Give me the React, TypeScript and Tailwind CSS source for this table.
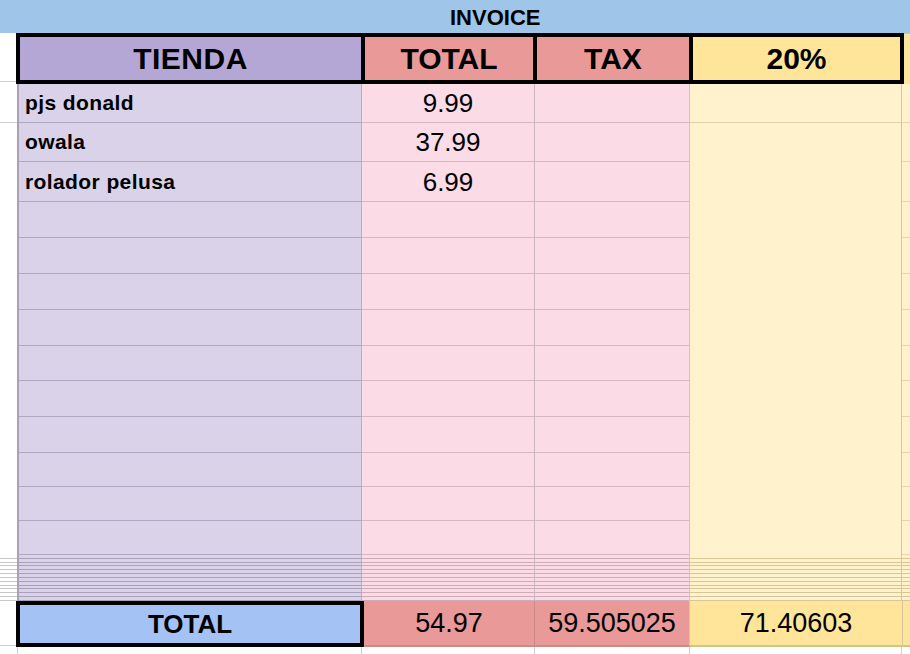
const ROWS = [39, 39, 40, 36, 36, 36, 36, 35, 36, 36, 34, 34, 34];
const ITEMS = [
  { name: 'pjs donald', total: '9.99' },
  { name: 'owala', total: '37.99' },
  { name: 'rolador pelusa', total: '6.99' },
];

function Stripes({ bg, line }: { bg: string; line: string }) {
  return (
    <div className={`flex flex-col h-[46px] ${bg}`}>
      {Array.from({ length: 12 }).map((_, i) => (
        <div key={i} className={`flex-1 border-b ${line}`} />
      ))}
    </div>
  );
}

export default function App() {
  return (
    <div className="w-[910px] h-[654px] overflow-hidden bg-white font-['Liberation_Sans',Arial,sans-serif] text-black">
      {/* INVOICE band */}
      <div className="h-[33px] bg-[#9fc5e8] flex items-center pl-[450px] pt-[3px]">
        <span className="text-[22px] font-bold leading-none">INVOICE</span>
      </div>

      {/* HEADER */}
      <div className="flex h-[51px]">
        <div className="w-[16px] shrink-0 flex flex-col">
          <div className="flex-1" />
          <div className="h-[3px] border-t border-[#cfcfcf]" />
        </div>
        <div className="w-[345px] shrink-0 bg-[#b4a7d6] border-y-4 border-l-4 border-black flex items-center justify-center text-[30px] font-bold tracking-[0.5px]">
          TIENDA
        </div>
        <div className="w-[172px] shrink-0 bg-[#ea9999] border-y-4 border-l-4 border-black flex items-center justify-center text-[30px] font-bold">
          TOTAL
        </div>
        <div className="w-[156px] shrink-0 bg-[#ea9999] border-y-4 border-l-4 border-black flex items-center justify-center text-[30px] font-bold">
          TAX
        </div>
        <div className="w-[215px] shrink-0 bg-[#ffe599] border-4 border-black flex items-center justify-center text-[30px] font-bold">
          20%
        </div>
        <div className="flex-1 bg-[#ffe599] border-t border-[#d9c584]" />
      </div>

      {/* BODY */}
      <div className="flex">
        {/* gutter */}
        <div className="w-[17px] shrink-0 flex flex-col">
          <div className="h-[39px] border-b border-[#d0d0d0]" />
          <div className="h-[432px]" />
          <Stripes bg="bg-white" line="border-[#c8c8c8]" />
        </div>

        {/* TIENDA column */}
        <div className="w-[345px] shrink-0 flex flex-col border-l-2 border-r border-l-[#aaa1b9] border-r-[#b8adc6]">
          {ROWS.map((h, i) => (
            <div
              key={i}
              style={{ height: h }}
              className="bg-[#d9d2e9] border-b border-[#afa6bf] flex items-end pl-[6px] pb-[9px] text-[21px] font-bold leading-none tracking-[0.4px]"
            >
              {ITEMS[i]?.name}
            </div>
          ))}
          <Stripes bg="bg-[#d9d2e9]" line="border-[#a9a0b9]" />
        </div>

        {/* TOTAL column */}
        <div className="w-[173px] shrink-0 flex flex-col border-r border-[#cdb6c0]">
          {ROWS.map((h, i) => (
            <div
              key={i}
              style={{ height: h }}
              className="bg-[#fadbe6] border-b border-[#d5b7c2] flex items-end justify-center pb-[6px] text-[26px] leading-none"
            >
              {ITEMS[i]?.total}
            </div>
          ))}
          <Stripes bg="bg-[#fadbe6]" line="border-[#cfaab8]" />
        </div>

        {/* TAX column */}
        <div className="w-[155px] shrink-0 flex flex-col border-r border-[#d6c6ab]">
          {ROWS.map((h, i) => (
            <div key={i} style={{ height: h }} className="bg-[#fadbe6] border-b border-[#d5b7c2]" />
          ))}
          <Stripes bg="bg-[#fadbe6]" line="border-[#cfaab8]" />
        </div>

        {/* 20% column */}
        <div className="w-[212px] shrink-0 flex flex-col border-r border-[#d3c6a4]">
          <div className="h-[39px] bg-[#fff2cc] border-b border-[#dfd1a9]" />
          <div className="h-[432px] bg-[#fff2cc]" />
          <Stripes bg="bg-[#fff2cc]" line="border-[#d8c699]" />
        </div>

        {/* next column */}
        <div className="flex-1 flex flex-col">
          {ROWS.map((h, i) => (
            <div key={i} style={{ height: h }} className="bg-[#fff2cc] border-b border-[#e3d5ad]" />
          ))}
          <Stripes bg="bg-[#fff2cc]" line="border-[#d8c699]" />
        </div>
      </div>

      {/* TOTAL ROW */}
      <div className="flex h-[46px]">
        <div className="w-[16px] shrink-0 flex flex-col">
          <div className="flex-1" />
          <div className="h-[2px] border-t border-[#cfcfcf]" />
        </div>
        <div className="w-[348px] shrink-0 bg-[#a4c2f4] border-4 border-black flex items-center justify-center text-[26px] font-bold leading-none">
          TOTAL
        </div>
        <div className="w-[171px] shrink-0 bg-[#ea9999] border-r border-b-2 border-[#c98a8a] flex items-center justify-center text-[27px] leading-none">
          54.97
        </div>
        <div className="w-[155px] shrink-0 bg-[#ea9999] border-r border-b-2 border-r-[#d6c6ab] border-b-[#c98a8a] flex items-center justify-center text-[27px] leading-none">
          59.505025
        </div>
        <div className="w-[213px] shrink-0 bg-[#ffe599] border-r border-b-2 border-r-[#d3c6a4] border-b-[#d6c384] flex items-center justify-center text-[27px] leading-none">
          71.40603
        </div>
        <div className="flex-1 bg-[#ffe599] border-b-2 border-[#d6c384]" />
      </div>

      {/* below */}
      <div className="flex h-[10px]">
        <div className="w-[17px] shrink-0" />
        <div className="w-[345px] shrink-0 border-l border-r border-[#cfcfcf]" />
        <div className="w-[173px] shrink-0 border-r border-[#cfcfcf]" />
        <div className="w-[155px] shrink-0 border-r border-[#cfcfcf]" />
        <div className="w-[212px] shrink-0 border-r border-[#cfcfcf]" />
      </div>
    </div>
  );
}
